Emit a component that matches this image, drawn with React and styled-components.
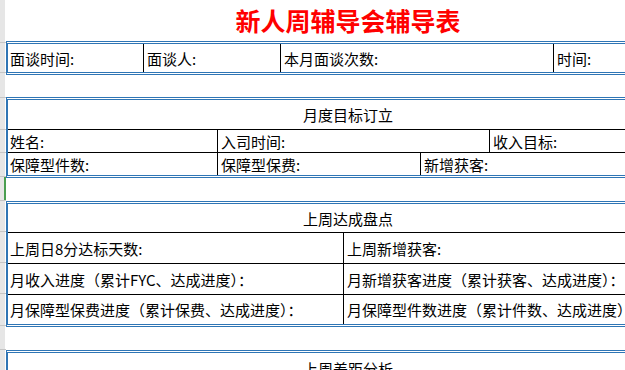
import React from "react";
import styled, { createGlobalStyle } from "styled-components";

const GlobalStyle = createGlobalStyle`
  html, body {
    margin: 0;
    padding: 0;
    background: #fff;
    overflow: hidden;
  }
  body {
    font-family: "Noto Sans CJK SC", "Microsoft YaHei", sans-serif;
    color: #000;
  }
`;

const BLUE = "#2f75b5";

// row header heights on the left (Excel style gutter)
const gutterRows = [43, 30, 25, 32, 23, 24, 24, 31, 31, 31, 32, 24, 30];
const ACTIVE_ROW = 6;

const blocks = [
  {
    rows: [
      {
        h: 28,
        cols: "135px 137px 273px 1fr",
        cells: ["面谈时间:", "面谈人:", "本月面谈次数:", "时间:"],
      },
    ],
  },
  {
    spacer: 22,
    header: { title: "月度目标订立", h: 29 },
    rows: [
      { h: 23, cols: "209px 272px 1fr", cells: ["姓名:", "入司时间:", "收入目标:"] },
      { h: 23, cols: "209px 203px 1fr", cells: ["保障型件数:", "保障型保费:", "新增获客:"] },
    ],
  },
  {
    spacer: 23,
    header: { title: "上周达成盘点", h: 28 },
    rows: [
      { h: 31, cols: "335px 1fr", cells: ["上周日8分达标天数:", "上周新增获客:"] },
      {
        h: 31,
        cols: "335px 1fr",
        cells: ["月收入进度（累计FYC、达成进度）：", "月新增获客进度（累计获客、达成进度）："],
      },
      {
        h: 30,
        cols: "335px 1fr",
        cells: ["月保障型保费进度（累计保费、达成进度）：", "月保障型件数进度（累计件数、达成进度）："],
      },
    ],
  },
  {
    spacer: 23,
    header: { title: "上周差距分析", h: 30 },
    rows: [],
  },
];

const App = () => {
  return (
    <>
      <GlobalStyle />
      <Page>
        <Gutter>
          {gutterRows.map((h, i) => (
            <GutterRow key={i} $h={h} $active={i === ACTIVE_ROW} />
          ))}
        </Gutter>

        <Sheet>
          <Title>新人周辅导会辅导表</Title>

          {blocks.map((block, bi) => (
            <React.Fragment key={bi}>
              {block.spacer && <Spacer $h={block.spacer} />}
              <Block>
                {block.header && (
                  <HeaderRow $h={block.header.h}>{block.header.title}</HeaderRow>
                )}
                {block.rows.map((row, ri) => (
                  <Row
                    key={ri}
                    $h={row.h}
                    $cols={row.cols}
                    $line={!!block.header || ri > 0}
                  >
                    {row.cells.map((c, ci) => (
                      <Cell key={ci}>{c}</Cell>
                    ))}
                  </Row>
                ))}
              </Block>
            </React.Fragment>
          ))}
        </Sheet>
      </Page>
    </>
  );
};

export default App;

const Page = styled.div`
  display: flex;
  align-items: flex-start;
  width: 700px;
  height: 370px;
`;

const Gutter = styled.div`
  width: 6px;
  flex: none;
  display: flex;
  flex-direction: column;
  background: #e6e6e6;
`;

const GutterRow = styled.div`
  height: ${(p) => p.$h}px;
  box-sizing: border-box;
  border-bottom: 1px solid #c6c6c6;
  box-shadow: ${(p) => (p.$active ? "inset -2px 0 #4a9e50" : "inset -1px 0 #fff")};
`;

const Sheet = styled.div`
  width: 684px;
  flex: none;
  display: flex;
  flex-direction: column;
`;

const Title = styled.div`
  height: 41px;
  display: flex;
  align-items: center;
  justify-content: center;
  color: #ff0000;
  font-size: 25px;
  font-weight: 700;
  padding-bottom: 1px;
  box-sizing: border-box;
`;

const Spacer = styled.div`
  height: ${(p) => p.$h}px;
`;

const Block = styled.div`
  border-top: 3px double ${BLUE};
  border-bottom: 3px double ${BLUE};
  border-left: 2px solid ${BLUE};
  border-right: 2px solid ${BLUE};
  display: flex;
  flex-direction: column;
`;

const HeaderRow = styled.div`
  height: ${(p) => p.$h}px;
  display: flex;
  align-items: center;
  justify-content: center;
  font-size: 15px;
`;

const Row = styled.div`
  display: grid;
  grid-template-columns: ${(p) => p.$cols};
  height: ${(p) => p.$h}px;
  box-sizing: border-box;
  border-top: ${(p) => (p.$line ? "1px solid #000" : "none")};
`;

const Cell = styled.div`
  display: flex;
  align-items: center;
  padding: 0 3px 0 2px;
  font-size: 15px;
  white-space: nowrap;
  overflow: hidden;
  box-sizing: border-box;

  & + & {
    border-left: 1px solid #000;
    padding-left: 3px;
  }
`;
